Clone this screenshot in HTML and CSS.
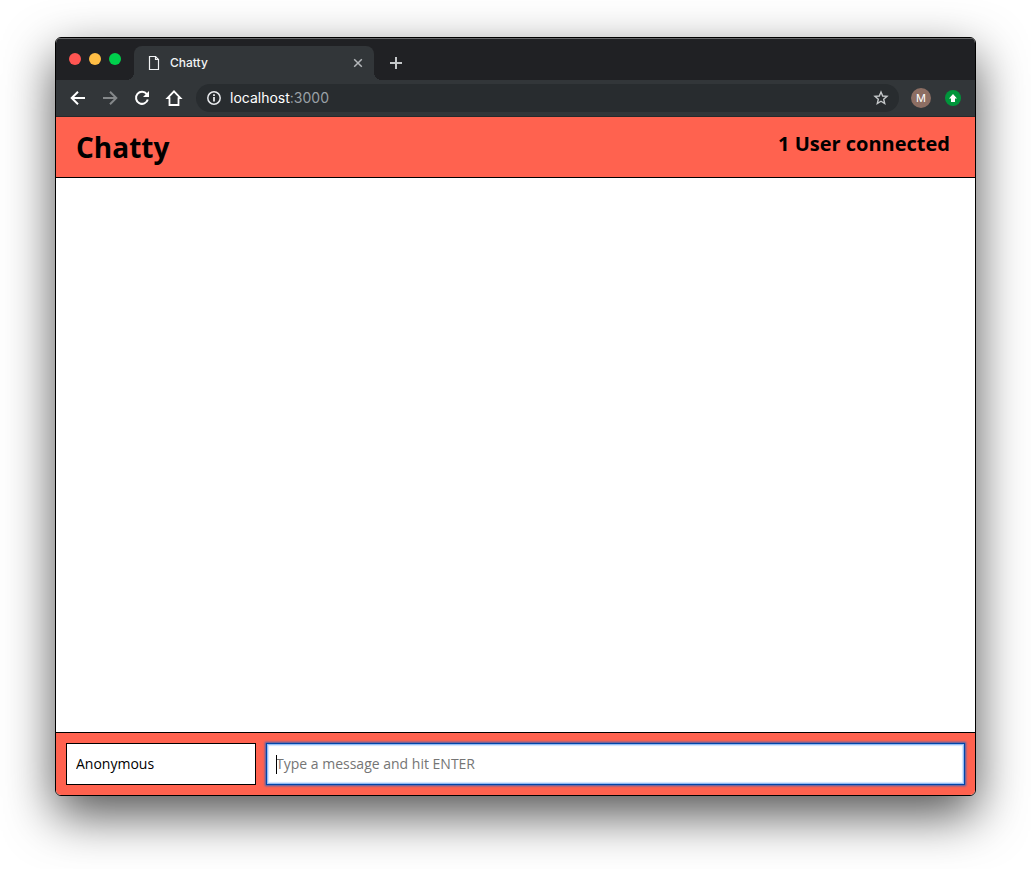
FILE: index.html
```html
<!DOCTYPE html>
<html lang="en">
<head>
<meta charset="utf-8">
<meta name="viewport" content="width=device-width, initial-scale=1">
<title>Chatty</title>
<link rel="stylesheet" href="styles.css">
</head>
<body>
<div class="window">
  <div class="tab-strip">
    <div class="lights">
      <button class="light light-close" aria-label="Close window"></button>
      <button class="light light-minimize" aria-label="Minimize window"></button>
      <button class="light light-zoom" aria-label="Zoom window"></button>
    </div>
    <div class="tab">
      <svg class="tab-icon" width="12" height="16" viewBox="0 0 12 16" fill="none" stroke="#f1f3f4" stroke-width="1.2" aria-hidden="true"><path d="M1.5 1.500h6l3 3v10h-9z"/><path d="M7.500 1.500v3h3"/></svg>
      <span class="tab-title">Chatty</span>
      <button class="icon-button tab-close" aria-label="Close tab"><svg width="10" height="10" viewBox="0 0 10 10" stroke="#b4b7ba" stroke-width="1.500"><path d="M1.200 1.200l7.600 7.600M8.800 1.200l-7.600 7.600"/></svg></button>
    </div>
    <button class="icon-button new-tab" aria-label="New tab"><svg width="12" height="12" viewBox="0 0 12 12" stroke="#c4c7c9" stroke-width="2"><path d="M6 0v12M0 6h12"/></svg></button>
  </div>
  <div class="toolbar">
    <div class="nav">
      <button class="icon-button" aria-label="Back"><svg width="16" height="16" viewBox="0 0 16 16" fill="none" stroke="#fff" stroke-width="2"><path d="M15 8H2M8 1.700L1.700 8L8 14.300"/></svg></button>
      <button class="icon-button" aria-label="Forward" disabled><svg width="16" height="16" viewBox="0 0 16 16" fill="none" stroke="#85888a" stroke-width="2"><path d="M1 8h13M8 1.700L14.300 8L8 14.300"/></svg></button>
      <button class="icon-button" aria-label="Reload"><svg width="16" height="16" viewBox="0 0 16 16"><path d="M12.800 4.200A6 6 0 1 0 13.800 9.500" fill="none" stroke="#fff" stroke-width="2"/><path d="M15 1v6H9z" fill="#fff"/></svg></button>
      <button class="icon-button" aria-label="Home"><svg width="18" height="18" viewBox="0 0 18 18" fill="none" stroke="#fff" stroke-width="1.800"><path d="M2.500 9.200H4.500V16H13.500V9.200H15.500L9 2.300z"/></svg></button>
    </div>
    <div class="address-bar">
      <svg width="14" height="14" viewBox="0 0 14 14" fill="none" stroke="#e8eaed" aria-hidden="true"><circle cx="7" cy="7" r="6.200" stroke-width="1.500"/><path d="M7 6v4.500M7 3.300v1.700" stroke-width="1.800"/></svg>
      <span class="address">localhost<span class="port">:3000</span></span>
      <button class="icon-button star" aria-label="Bookmark this page"><svg width="16" height="16" viewBox="0 0 16 16" fill="none" stroke="#c4c7c9" stroke-width="1.400"><path d="M8 2L9.700 6L14 6.400L10.700 9.200L11.700 13.500L8 11.200L4.300 13.500L5.300 9.200L2 6.400L6.300 6z"/></svg></button>
    </div>
    <button class="profile" aria-label="Profile M">M</button>
    <button class="icon-button update" aria-label="Update available"><svg width="16" height="16" viewBox="0 0 16 16"><circle cx="8" cy="8" r="8" fill="#00953b"/><path d="M8 4L12 8.500H10V12H6V8.500H4z" fill="#fff"/></svg></button>
  </div>
  <header class="app-header">
    <h1 class="brand">Chatty</h1>
    <p class="user-count">1 User connected</p>
  </header>
  <main class="messages"></main>
  <footer class="chat-bar">
    <input class="username" type="text" value="Anonymous" aria-label="Your name">
    <div class="message-field">
      <input class="message" type="text" placeholder="Type a message and hit ENTER" aria-label="Message">
      <span class="caret"></span>
    </div>
  </footer>
</div>
</body>
</html>
```
FILE: styles.css
```css
* {
  box-sizing: border-box;
}

body {
  margin: 0;
  min-height: 100vh;
  padding: 37px 55px 73px;
  display: flex;
  background: #fff;
  font-family: "Open Sans", "Noto Sans", sans-serif;
}

button {
  border: 0;
  padding: 0;
  font: inherit;
}

svg {
  display: block;
}

.window {
  flex: 1;
  display: flex;
  flex-direction: column;
  overflow: hidden;
  border: 1px solid #000;
  border-radius: 6px;
  background: #fff;
  box-shadow: 0 19px 50px rgba(0, 0, 0, 0.68);
}

.tab-strip {
  display: flex;
  align-items: flex-end;
  height: 42px;
  padding-left: 13px;
  border-top: 1px solid #68696b;
  background: #202124;
  font-family: Inter, sans-serif;
}

.lights {
  display: flex;
  gap: 8px;
  width: 65px;
  padding-bottom: 15px;
}

.light {
  width: 12px;
  height: 12px;
  border-radius: 50%;
}

.light-close {
  background: #ff5552;
}

.light-minimize {
  background: #ffbe45;
}

.light-zoom {
  background: #00d04c;
}

.icon-button {
  display: flex;
  align-items: center;
  justify-content: center;
  background: none;
}

.tab {
  position: relative;
  display: flex;
  align-items: center;
  width: 240px;
  height: 34px;
  padding: 0 11px 0 14px;
  border-radius: 8px 8px 0 0;
  background: #323639;
}

.tab::before,
.tab::after {
  content: "";
  position: absolute;
  bottom: 0;
  width: 8px;
  height: 8px;
}

.tab::before {
  right: 100%;
  background: radial-gradient(circle at 0 0, transparent 8px, #323639 8px);
}

.tab::after {
  left: 100%;
  background: radial-gradient(circle at 100% 0, transparent 8px, #323639 8px);
}

.tab-title {
  flex: 1;
  margin-left: 10px;
  padding-bottom: 2px;
  font-size: 12px;
  font-weight: 500;
  color: #f1f3f4;
}

.new-tab {
  width: 44px;
  height: 34px;
}

.toolbar {
  display: flex;
  align-items: center;
  height: 37px;
  padding: 0 14px 0 6px;
  border-bottom: 1px solid #27292b;
  background: #323639;
  font-family: Inter, sans-serif;
}

.nav {
  display: flex;
}

.nav .icon-button {
  width: 32px;
  height: 28px;
}

.address-bar {
  flex: 1;
  display: flex;
  align-items: center;
  height: 28px;
  margin: 0 12px 0 6px;
  padding: 0 10px 0 11px;
  border-radius: 14px;
  background: #282c2f;
}

.address {
  flex: 1;
  margin-left: 9px;
  padding-bottom: 1px;
  font-size: 14px;
  color: #fff;
}

.port {
  color: #9aa0a6;
}

.profile {
  width: 20px;
  height: 20px;
  margin-right: 14px;
  border-radius: 50%;
  background: #8d6e63;
  color: #fff;
  font-size: 11px;
  line-height: 20px;
  text-align: center;
}

.app-header {
  display: flex;
  justify-content: space-between;
  height: 61px;
  padding: 10px 25px 0 20px;
  border-bottom: 1px solid #000;
  background: #ff624f;
  color: #000;
}

.brand {
  margin: 0;
  font-size: 28px;
  line-height: 40px;
}

.user-count {
  margin: 0;
  font-size: 20px;
  font-weight: 700;
  line-height: 34px;
}

.messages {
  flex: 1;
}

.chat-bar {
  display: flex;
  gap: 10px;
  padding: 10px;
  border-top: 1px solid #000;
  background: #ff624f;
}

.chat-bar input {
  height: 42px;
  padding: 0 9px 2px;
  border: 1px solid #000;
  background: #fff;
  color: #000;
  font: 14px "Open Sans", "Noto Sans", sans-serif;
}

.chat-bar .username {
  width: 190px;
}

.message-field {
  position: relative;
  flex: 1;
  display: flex;
}

.chat-bar .message {
  flex: 1;
  border-color: #0046a8;
  outline: 0;
  box-shadow: 0 0 2px 1px #3b63b8, inset 0 0 0 1px #94bdf5, inset 0 0 1px 2px #d3e4fd;
}

.message::placeholder {
  color: #757575;
}

.caret {
  position: absolute;
  top: 12px;
  left: 10px;
  width: 1px;
  height: 19px;
  background: #000;
}
```
